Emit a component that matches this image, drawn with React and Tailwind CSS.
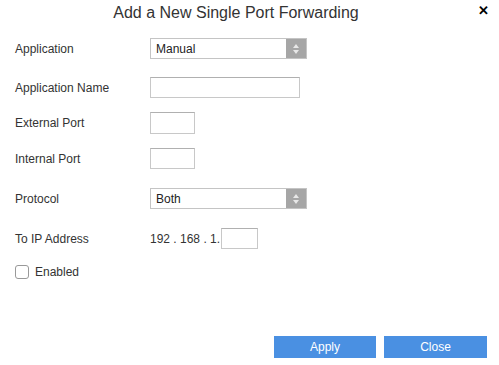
import React from "react";

function SelectBox({ value }) {
  return (
    <div className="flex h-[21px] w-[157px] border border-[#c4c4c4] bg-white">
      <div className="flex flex-1 items-center pl-[5px] text-[12px] text-[#222]">{value}</div>
      <div className="flex w-[20px] flex-col items-center justify-center gap-[2px] bg-[#a6a6a6]">
        <svg width="6" height="4" viewBox="0 0 6 4"><path d="M3 0L6 4H0z" fill="#e8e8e8" /></svg>
        <svg width="6" height="4" viewBox="0 0 6 4"><path d="M0 0H6L3 4z" fill="#e8e8e8" /></svg>
      </div>
    </div>
  );
}

function Input({ w, h }) {
  return <div className={`${w} ${h} border border-[#c8c8c8] border-t-[#b0b0b0] bg-white`} />;
}

function Row({ label, children, mt, h }) {
  return (
    <div className={`flex items-center ${mt} ${h}`}>
      <div className="w-[135px] text-[12px] text-[#333]">{label}</div>
      {children}
    </div>
  );
}

export default function App() {
  return (
    <div
      className="relative h-[365px] w-[499px] bg-white"
      style={{ fontFamily: '"Liberation Sans", Arial, sans-serif' }}
    >
      <div className="flex h-[25px] w-[472px] items-center justify-center text-[16px] text-[#333]">
        Add a New Single Port Forwarding
      </div>
      <div className="absolute right-[10px] top-[4px] text-[13px] font-bold leading-none text-black">✕</div>
      <div className="pl-[15px]">
        <Row label="Application" mt="mt-[13px]" h="h-[21px]">
          <SelectBox value="Manual" />
        </Row>
        <Row label="Application Name" mt="mt-[18px]" h="h-[21px]">
          <Input w="w-[150px]" h="h-[21px]" />
        </Row>
        <Row label="External Port" mt="mt-[14px]" h="h-[22px]">
          <Input w="w-[45px]" h="h-[22px]" />
        </Row>
        <Row label="Internal Port" mt="mt-[14px]" h="h-[21px]">
          <Input w="w-[45px]" h="h-[21px]" />
        </Row>
        <Row label="Protocol" mt="mt-[19px]" h="h-[21px]">
          <SelectBox value="Both" />
        </Row>
        <Row label="To IP Address" mt="mt-[19px]" h="h-[21px]">
          <div className="flex items-center text-[12px] text-[#333]">
            <span className="mr-[1px]">192 . 168 . 1.</span>
            <Input w="w-[37px]" h="h-[21px]" />
          </div>
        </Row>
        <div className="mt-[15px] flex h-[16px] items-center">
          <div className="h-[14px] w-[14px] rounded-[3px] border border-[#999] bg-white" />
          <span className="ml-[6px] text-[12px] text-[#333]">Enabled</span>
        </div>
      </div>
      <div className="mt-[56px] flex justify-end gap-[8px] pr-[12px]">
        <button className="h-[22px] w-[102px] bg-[#4a90e2] text-[12px] text-white">Apply</button>
        <button className="h-[22px] w-[103px] bg-[#4a90e2] text-[12px] text-white">Close</button>
      </div>
    </div>
  );
}
